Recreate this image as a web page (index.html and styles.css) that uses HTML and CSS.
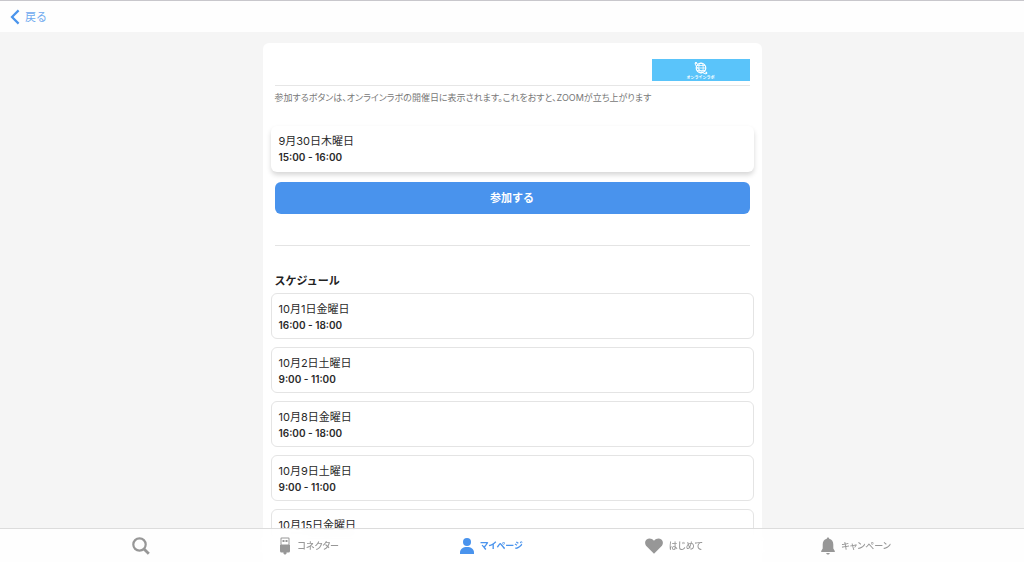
FILE: index.html
```html
<!DOCTYPE html>
<html lang="ja">
<head>
    <meta charset="UTF-8">
    <meta name="viewport" content="width=device-width, initial-scale=1.0">
    <title>オンラインラボ</title>
    <link rel="stylesheet" href="styles.css">
</head>
<body>

    <header class="top-bar">
        <a href="#" class="back">
            <svg width="10" height="16" viewBox="0 0 10 16"><path d="M8.6 1.4 2 8l6.600 6.600" fill="none" stroke="currentColor" stroke-width="2.200"/></svg>
            <span>戻る</span>
        </a>
    </header>

    <main class="content">
        <div class="panel">
            <div class="panel-head">
                <div class="banner">
                    <svg width="14" height="14" viewBox="0 0 14 14" fill="none" stroke="#fff">
                        <circle cx="7" cy="7" r="4.800" stroke-width="1.200"/>
                        <ellipse cx="7" cy="7" rx="2.200" ry="4.800" stroke-width=".8"/>
                        <path d="M2.200 7h9.600M3 4.500h8M3 9.500h8" stroke-width=".8"/>
                        <path d="M3.500 2.500C1.500 1 .8 1.300 1.200 3c.8 3 6.500 9 10 9.800 1.700.3 1.800-.8.800-2.300" stroke-width=".9"/>
                        <circle cx="2" cy="2" r="1" fill="#fff" stroke="none"/>
                        <circle cx="12.300" cy="12" r="1" fill="#fff" stroke="none"/>
                    </svg>
                    <span>オンラインラボ</span>
                </div>
            </div>
            <p class="note">参加するボタンは、オンラインラボの開催日に表示されます。これをおすと、ZOOMが立ち上がります</p>

            <div class="slot today">
                <div class="date">9月30日木曜日</div>
                <div class="time">15:00 - 16:00</div>
            </div>
            <button type="button" class="join">参加する</button>

            <h2 class="title">スケジュール</h2>
            <ul class="schedule">
                <li class="slot">
                    <div class="date">10月1日金曜日</div>
                    <div class="time">16:00 - 18:00</div>
                </li>
                <li class="slot">
                    <div class="date">10月2日土曜日</div>
                    <div class="time">9:00 - 11:00</div>
                </li>
                <li class="slot">
                    <div class="date">10月8日金曜日</div>
                    <div class="time">16:00 - 18:00</div>
                </li>
                <li class="slot">
                    <div class="date">10月9日土曜日</div>
                    <div class="time">9:00 - 11:00</div>
                </li>
                <li class="slot">
                    <div class="date">10月15日金曜日</div>
                </li>
            </ul>
        </div>
    </main>

    <nav class="tab-bar">
        <a href="#" class="tab search" aria-label="検索">
            <svg width="18" height="18" viewBox="0 0 18 18" fill="none" stroke="currentColor"><circle cx="7.500" cy="7.500" r="6.200" stroke-width="2.200"/><path d="m12 12 4.800 4.800" stroke-width="2.800"/></svg>
        </a>
        <a href="#" class="tab">
            <svg width="12" height="18" viewBox="0 0 12 18" fill="currentColor"><path fill-rule="evenodd" d="M2.500.5h7q1 0 1 1V8h.5v6q0 1.500-1.500 1.500H7.500v1.300L6 17.800l-1.500-1V15.500H2.500Q1 15.500 1 14V8h.5V1.500q0-1 1-1zM2.500 1.500V7.500h7v-6z"/><path d="M3.500 3h2v2h-2zM6.500 3h2v2h-2z"/></svg>
            <span>コネクター</span>
        </a>
        <a href="#" class="tab active">
            <svg width="14" height="18" viewBox="0 0 14 18" fill="currentColor"><circle cx="7" cy="5" r="4"/><path d="M0 17v-1.500C0 12 3 10 7 10s7 2 7 5.500V17z"/></svg>
            <span>マイページ</span>
        </a>
        <a href="#" class="tab">
            <svg width="18" height="18" viewBox="0 0 18 18" fill="currentColor"><path d="M9 16.800 1.800 9.600C-.5 7.200-.3 4 1.600 2.500 3.800.9 7 1.300 9 3.800c2-2.500 5.200-2.900 7.400-1.300 1.900 1.500 2.100 4.700-.2 7.100z"/></svg>
            <span>はじめて</span>
        </a>
        <a href="#" class="tab">
            <svg width="14" height="18" viewBox="0 0 14 18" fill="currentColor"><path d="M7 .5c.7 0 1.200.5 1.200 1.200C11 2.300 12.300 4.500 12.300 7.500v4L13.800 14v1H.2v-1l1.500-2.500v-4C1.700 4.500 3 2.300 5.800 1.700 5.800 1 6.300.5 7 .5zM5.200 16h3.600c-.2 1-1 1.600-1.800 1.600S5.400 17 5.200 16z"/></svg>
            <span>キャンペーン</span>
        </a>
    </nav>

</body>
</html>
```
FILE: styles.css
```css
* {
    box-sizing: border-box;
}
body {
    margin: 0;
    height: 100vh;
    display: flex;
    flex-direction: column;
    background: #f5f5f5;
    color: #2a2a2a;
    font-family: Inter, "Noto Sans CJK JP", sans-serif;
    font-size: 11px;
    line-height: 16px;
}
a {
    color: inherit;
    text-decoration: none;
}

.top-bar {
    flex: none;
    height: 32px;
    display: flex;
    align-items: center;
    padding: 0 10px;
    background: #fefefe;
    border-top: 1px solid #c8c7cc;
}
.back {
    display: flex;
    align-items: center;
    gap: 5px;
    color: #4a94ec;
}
.back span {
    opacity: 0.8;
}

.content {
    flex: 1;
    overflow: auto;
    scrollbar-width: none;
    padding: 11px 12px 0;
}
.panel {
    max-width: 499px;
    margin: 0 auto;
    padding: 16px 8px 40px;
    background: #fff;
    border-radius: 6px;
}
.panel-head {
    display: flex;
    justify-content: flex-end;
    margin: 0 4px;
    padding-bottom: 4px;
    border-bottom: 1px solid #e6e6e6;
}
.banner {
    width: 98px;
    height: 22px;
    display: flex;
    flex-direction: column;
    align-items: center;
    justify-content: center;
    background: #5ac4fa;
    color: #fff;
    font-size: 4px;
    line-height: 5px;
    font-weight: bold;
}
.note {
    margin: 5px 4px 21px;
    color: #777;
    font-size: 9px;
    line-height: 14px;
    font-feature-settings: "palt";
}

.slot {
    padding: 7px 7px 5px;
    border: 1px solid #e4e4e4;
    border-radius: 6px;
}
.time {
    font-size: 10px;
    font-weight: 600;
}
.today {
    padding: 7px 8px;
    border: none;
    box-shadow: 0 3px 5px rgba(0, 0, 0, 0.16);
}
.join {
    display: block;
    width: calc(100% - 8px);
    height: 32px;
    margin: 10px 4px 31px;
    border: none;
    border-radius: 6px;
    background: #4993ed;
    color: #fff;
    font: inherit;
    font-weight: bold;
    cursor: pointer;
}
.title {
    margin: 0 4px;
    padding: 27px 0 4px;
    border-top: 1px solid #e4e4e4;
    color: #222;
    font-size: 11px;
    font-weight: bold;
}
.schedule {
    display: flex;
    flex-direction: column;
    gap: 8px;
    margin: 0;
    padding: 0;
    list-style: none;
}

/* bottom menu, stays over the list */
.tab-bar {
    position: fixed;
    left: 0;
    right: 0;
    bottom: 0;
    height: 34px;
    display: grid;
    grid-template-columns: repeat(5, 1fr);
    padding: 0 8% 0 3%;
    padding: 0 7.5% 0 3.5%;
    border-top: 1px solid #dcdcdc;
    background: rgba(255, 255, 255, 0.85);
    backdrop-filter: blur(8px);
    color: #979797;
    font-size: 9px;
    font-weight: 500;
    font-feature-settings: "palt";
}
.tab {
    display: flex;
    align-items: center;
    justify-content: center;
    gap: 6px;
}
.search {
    padding-left: 28px;
}
.active {
    color: #4993ed;
    font-weight: bold;
}
```
